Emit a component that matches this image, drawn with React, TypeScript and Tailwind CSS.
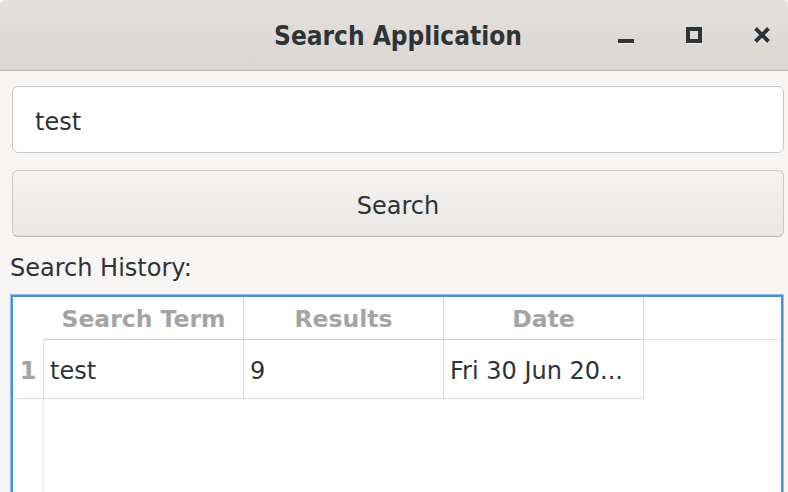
import React from 'react';

const headers = ['Search Term', 'Results', 'Date'];
const rows = [['test', '9', 'Fri 30 Jun 20...']];

const TitleBar: React.FC = () => (
  <div className="h-[71px] shrink-0 flex items-center rounded-t-[6px] border-b border-[#bfb8b1] bg-gradient-to-b from-[#e3e0dd] to-[#dad6d2]">
    <div className="flex-1" />
    <div className="font-['DejaVu_Sans_Condensed','DejaVu_Sans',sans-serif] [font-stretch:condensed] font-bold text-[26px] text-[#2e3436] leading-none pl-[26px] pt-[1px]">
      Search Application
    </div>
    <div className="flex-1 flex justify-end items-center gap-[52px] pr-[18px]">
      {/* minimize */}
      <div className="w-[16px] h-[16px] flex items-end">
        <div className="w-[16px] h-[4px] bg-[#2e3436] shadow-[0_1px_0_#f6f5f4]" />
      </div>
      {/* maximize */}
      <div className="w-[16px] h-[16px] border-[4px] border-[#2e3436] shadow-[0_1px_0_#f6f5f4]" />
      {/* close */}
      <svg width="16" height="16" viewBox="0 0 16 16">
        <path d="M1.5 2.5 L14.5 15.5 M14.5 2.5 L1.5 15.5" stroke="#f6f5f4" strokeWidth="4" />
        <path d="M1.5 1.5 L14.5 14.5 M14.5 1.5 L1.5 14.5" stroke="#2e3436" strokeWidth="4" />
      </svg>
    </div>
  </div>
);

const App: React.FC = () => {
  return (
    <div className="w-[788px] h-[492px] overflow-hidden bg-[#f6f5f4] flex flex-col font-['DejaVu_Sans',sans-serif] text-[24px] text-[#2e3436]">
      <TitleBar />

      <div className="flex flex-col pt-[15px] pl-[10px] pr-[4px]">
        <div className="ml-[2px] h-[67px] bg-white border border-[#cdc7c2] rounded-[6px] flex items-center pl-[22px] pt-[4px]">
          test
        </div>

        <button className="mt-[17px] ml-[2px] h-[67px] rounded-[6px] border border-[#cdc7c2] border-b-[#bfb8b1] bg-gradient-to-b from-[#f4f3f2] to-[#e9e7e5] flex items-center justify-center pt-[4px]">
          Search
        </button>

        <div className="mt-[17px] leading-[28px]">Search History:</div>

        <div className="mt-[12px] h-[220px] border border-[#95bcec] flex">
          <div className="flex-1 border-2 border-[#4a90d9] bg-white flex flex-col">
            {/* header */}
            <div className="flex h-[43px]">
              <div className="w-[31px] shrink-0" />
              {headers.map((h) => (
                <div
                  key={h}
                  className="w-[200px] shrink-0 border-r border-b border-r-[#d6d6d6] border-b-[#cfcfcf] flex items-center justify-center font-bold text-[#a4a4a4] text-[23.5px] pt-[3px]"
                >
                  {h}
                </div>
              ))}
              <div className="flex-1 border-b border-[#e8e8e8]" />
            </div>

            {/* rows */}
            {rows.map((r, i) => (
              <div key={i} className="flex h-[59px] w-[631px] border-b border-[#dedad7]">
                <div className="w-[31px] shrink-0 border-r border-[#dedad7] flex items-center justify-center font-bold text-[#a4a4a4] pt-[3px]">
                  {i + 1}
                </div>
                {r.map((c, j) => (
                  <div
                    key={j}
                    className="w-[200px] shrink-0 border-r border-[#dedad7] flex items-center pl-[6px] whitespace-nowrap overflow-hidden pt-[3px]"
                  >
                    {c}
                  </div>
                ))}
              </div>
            ))}

            <div className="flex-1 flex">
              <div className="w-[31px] border-r border-[#ececec]" />
            </div>
          </div>
        </div>
      </div>
    </div>
  );
};

export default App;
